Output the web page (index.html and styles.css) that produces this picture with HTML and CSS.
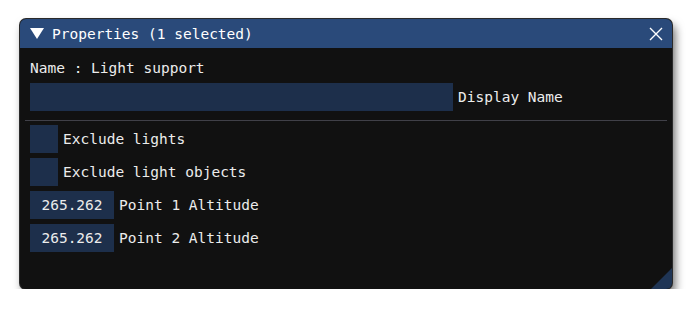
FILE: index.html
```html
<!DOCTYPE html>
<html lang="en">
<head>
  <meta charset="UTF-8">
  <title>Properties</title>
  <link rel="stylesheet" href="styles.css">
</head>
<body>
  <div class="window">
    <div class="titlebar">
      <svg class="collapse" width="14" height="12" viewBox="0 0 14 12"><polygon points="0,0 14,0 7,11" fill="#fff"/></svg>
      <span class="title">Properties (1 selected)</span>
      <svg class="close" width="14" height="14" viewBox="0 0 14 14"><path d="M1 1 L13 13 M13 1 L1 13" stroke="#fff" stroke-width="1.4"/></svg>
    </div>

    <div class="content">
      <div class="name">Name : Light support</div>

      <div class="row">
        <div class="field wide"></div>
        <span class="label">Display Name</span>
      </div>

      <hr class="sep">

      <div class="rows">
        <div class="row">
          <div class="field check"></div>
          <span class="label">Exclude lights</span>
        </div>
        <div class="row">
          <div class="field check"></div>
          <span class="label">Exclude light objects</span>
        </div>
        <div class="row">
          <div class="field num">265.262</div>
          <span class="label">Point 1 Altitude</span>
        </div>
        <div class="row">
          <div class="field num">265.262</div>
          <span class="label">Point 2 Altitude</span>
        </div>
      </div>
    </div>

    <div class="grip"></div>
  </div>
</body>
</html>
```

FILE: styles.css
```css
body {
  margin: 0;
  padding: 19px 0 0 20px;
  background-color: #fff;
  font-family: "DejaVu Sans Mono", "Liberation Mono", monospace;
  font-size: 14.5px;
  color: #ececec;
}

.window {
  position: relative;
  width: 652px;
  height: 270px;
  background-color: #111;
  border-radius: 6px;
  box-shadow: 0 0 0 1px #2a2a2a, 3px 6px 10px rgba(0, 0, 0, 0.6);
  overflow: hidden;
}

.titlebar {
  display: flex;
  align-items: center;
  height: 29px;
  padding: 1px 9px 0 10px;
  box-sizing: border-box;
  background-color: #2a4a7a;
  color: #fff;
}

.collapse {
  margin-right: 8px;
}

.title {
  flex: 1;
}

.content {
  padding: 8px 10px 0 10px;
}

.name {
  line-height: 24px;
  margin-bottom: 3px;
}

.row {
  display: flex;
  align-items: center;
  gap: 5px;
  height: 28px;
}

.rows {
  display: flex;
  flex-direction: column;
  gap: 5px;
}

.field {
  height: 28px;
  background-color: #1d2f4b;
}

.wide {
  width: 423px;
}

.check {
  width: 28px;
}

.num {
  width: 84px;
  line-height: 28px;
  text-align: center;
}

.sep {
  border: none;
  border-top: 1px solid #404048;
  margin: 9px -5px 4px -5px;
}

.grip {
  position: absolute;
  right: 0;
  bottom: 0;
  width: 0;
  height: 0;
  border-left: 21px solid transparent;
  border-bottom: 21px solid #1f3555;
}
```
